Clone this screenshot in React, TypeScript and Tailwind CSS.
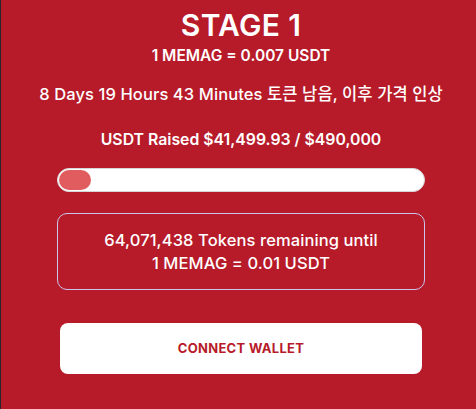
export default function App() {
  return (
    <div className="flex h-[409px] w-[476px] overflow-hidden bg-[#b71a29] font-['Inter','Noto_Sans_CJK_KR',sans-serif] text-white">
      <div className="w-px shrink-0 bg-[#24262b]" />
      <div className="flex w-[475px] flex-col items-center pl-[5px]">
        <h1 className="mt-[6px] text-[30px] font-semibold leading-[38px] tracking-[0.3px]">STAGE 1</h1>
        <p className="mt-[2px] text-[15.5px] font-semibold leading-[20px]">1 MEMAG = 0.007 USDT</p>
        <p className="mt-[18px] text-[16.5px] font-medium leading-[20px] tracking-[0.1px]">
          8 Days 19 Hours 43 Minutes 토큰 남음, 이후 가격 인상
        </p>
        <p className="mt-[26px] text-[15.8px] font-semibold leading-[20px]">USDT Raised $41,499.93 / $490,000</p>

        <div className="mt-[18px] h-[24px] w-[368px] rounded-full border border-[#d6d6d6] bg-white p-[1px]">
          <div className="h-full w-[32px] rounded-full bg-[#e05c5f]" />
        </div>

        <div className="mt-[21px] flex h-[77px] w-[368px] flex-col items-center justify-center rounded-[10px] border border-[#c9c6ee] text-[16.5px] font-medium leading-[23px] tracking-[0.1px]">
          <p>64,071,438 Tokens remaining until</p>
          <p>1 MEMAG = 0.01 USDT</p>
        </div>

        <button className="mt-[33px] h-[51px] w-[362px] rounded-[8px] bg-white text-[13px] font-bold tracking-[0.3px] text-[#b71a29]">
          CONNECT WALLET
        </button>
      </div>
    </div>
  );
}
